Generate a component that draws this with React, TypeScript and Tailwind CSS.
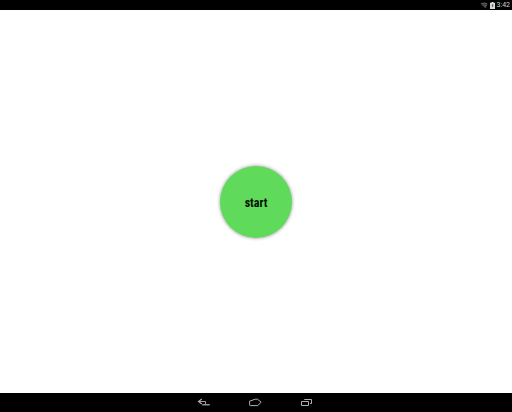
import { useState } from "react";

function StatusBar() {
    return (
        <header className="flex h-2.5 shrink-0 items-center justify-end gap-0.5 bg-black pr-0.5 text-[#d0d0d0]">
            <svg viewBox="0 0 8 7" className="h-[7px] w-2" fill="none" aria-hidden="true">
                <path d="M0.3 1.6Q4 -0.8 7.7 1.6L5.8 6.6Z" fill="#2c2c2c" />
                <path d="M1 2Q4 0.2 7.2 2M2.4 3.6Q4.2 2.4 6.7 3.6M4 5Q5 4.4 6.2 5" stroke="#777" strokeWidth="0.7" />
            </svg>
            <svg viewBox="0 0 5 7" className="h-[7px] w-[5px]" aria-hidden="true">
                <path d="M1.5 0h2v0.8H5V7H0V0.8h1.5z" fill="#d6d6d6" />
                <path d="M2.8 2L2 3.8h0.7L2.4 5.2L3.2 3.4H2.6z" fill="#333" stroke="#333" strokeWidth="0.3" />
            </svg>
            <time className="font-['Roboto',sans-serif] text-[7px] leading-none">3:42</time>
        </header>
    );
}

function NavBar() {
    return (
        <nav className="flex h-[19px] shrink-0 items-center justify-center gap-9 bg-black pr-0.5 text-[#b0b0b0]">
            <button type="button" aria-label="Back" className="flex">
                <svg viewBox="0 0 15 9" className="h-[9px] w-[15px]" fill="none" stroke="currentColor">
                    <path d="M4.8 1L1.5 3.5L4.8 6" strokeWidth="1.1" />
                    <path d="M2 3.5H8.5V6.7" strokeWidth="0.9" />
                    <path d="M5.2 6.8H12.8" strokeWidth="1.2" />
                </svg>
            </button>
            <button type="button" aria-label="Home" className="flex">
                <svg viewBox="0 0 15 9" className="h-[9px] w-[15px]" fill="none" stroke="currentColor">
                    <path d="M1.6 3.2L7.2 1.2H9.5L13.2 4.2L9.7 7.6H2.3Q1.6 7.6 1.6 6.9Z" strokeWidth="1" strokeLinejoin="round" />
                </svg>
            </button>
            <button type="button" aria-label="Recent apps" className="flex">
                <svg viewBox="0 0 15 9" className="h-[9px] w-[15px]" fill="none" stroke="currentColor">
                    <path d="M2.5 3.5H9.5V7.5H2.5Z" strokeWidth="1" />
                    <path d="M5.5 2V1.5H12.5V5.5H11" strokeWidth="1" />
                </svg>
            </button>
        </nav>
    );
}

export default function App() {
    const [started, setStarted] = useState(false);

    return (
        <div className="flex h-screen flex-col bg-white">
            <StatusBar />
            <main className="flex flex-1 items-center justify-center">
                <button
                    type="button"
                    aria-pressed={started}
                    onClick={() => setStarted((value) => !value)}
                    className="size-18 cursor-pointer rounded-full bg-[#5fda5b] pt-0.5 font-['Liberation_Sans_Narrow','Roboto_Condensed','Roboto',sans-serif] text-xs font-bold text-[#031003] shadow-[0_0_3px_1px_#bdbdbd]"
                >
                    start
                </button>
            </main>
            <NavBar />
        </div>
    );
}
